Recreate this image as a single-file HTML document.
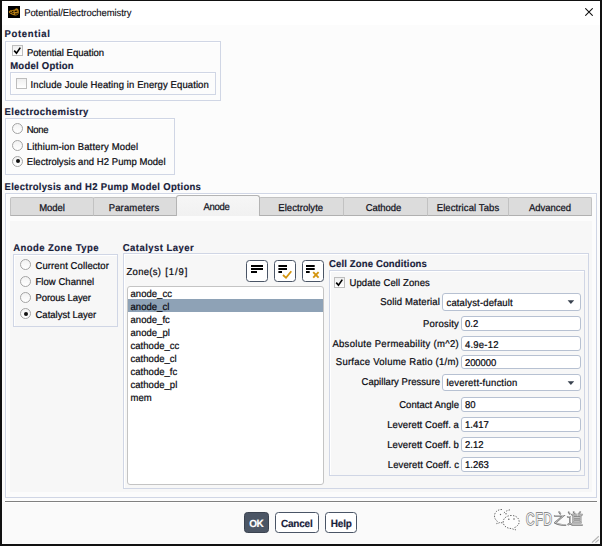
<!DOCTYPE html>
<html><head><meta charset="utf-8">
<style>
html,body{margin:0;padding:0;width:602px;height:546px;overflow:hidden;background:#fcfcfc;position:relative;}
*{box-sizing:border-box;}
.a{position:absolute;}
.t{position:absolute;font-family:"Liberation Sans",sans-serif;font-size:9.5px;letter-spacing:0px;line-height:12px;white-space:nowrap;color:#0a0a10;-webkit-text-stroke:0.22px #0a0a10;transform:translateY(0.9px) scaleY(1.04);transform-origin:0 9.2px;text-rendering:geometricPrecision;}
.b{font-weight:bold;font-size:9.5px;letter-spacing:0px;color:#17203a;-webkit-text-stroke:0.15px #17203a;}
.r{text-align:right;}
.gb{position:absolute;border:1px solid #d0d6e5;box-shadow:inset 1px 1px 0 #ffffff;}
.cb{position:absolute;width:11px;height:11px;border:1px solid #bdbdbd;background:linear-gradient(#efefef,#ffffff);}
.rd{position:absolute;width:11px;height:11px;border:1px solid #a4a4a4;border-radius:50%;background:linear-gradient(#f2f2f2,#ffffff);}
.rd.on::after{content:"";position:absolute;left:2.5px;top:2.5px;width:4px;height:4px;border-radius:50%;background:#111;}
.tab{position:absolute;top:197px;height:19px;background:#dcdcdc;border-radius:2px 2px 0 0;border:1px solid #c2c2c2;border-bottom-color:#b0b0b0;font-family:"Liberation Sans",sans-serif;font-size:9.5px;letter-spacing:-0.15px;text-align:center;line-height:19px;color:#14141e;-webkit-text-stroke:0.25px #14141e;}
.tb{position:absolute;background:#fff;border:1px solid #b7c1d2;border-radius:3px;}
.btn{position:absolute;background:#fff;border:1.3px solid #4a5566;border-radius:3.5px;}
.tl{display:inline-block;transform:translateY(-0.1px) scaleY(1.04);transform-origin:50% 12.6px;text-rendering:geometricPrecision;}
.chk{position:absolute;left:-1px;top:-1px;width:11px;height:11px;}
</style></head><body>
  <!-- window frame -->
  <div class="a" style="left:0;top:0;width:602px;height:1px;background:#111;"></div>
  <div class="a" style="left:0;top:0;width:2px;height:546px;background:#111;"></div>
  <div class="a" style="left:600px;top:0;width:2px;height:546px;background:#111;"></div>
  <div class="a" style="left:0;top:544px;width:602px;height:2px;background:#111;"></div>
  <!-- title bar -->
  <div class="a" style="left:2px;top:1px;width:598px;height:24px;background:#ffffff;"></div>
  <div class="a" style="left:8px;top:6px;width:12px;height:12px;background:#000;">
    <svg width="12" height="12" viewBox="0 0 12 12" style="position:absolute;left:0;top:0">
      <path d="M0.8 5.7 C1.5 4.5 2.5 4 3.5 4.3 C4.5 4 5 3.6 6 3.8 C7 3.2 7.8 2 9 2.2 C10.3 2.8 11 4.5 10.9 6 C10.8 8 9.5 9.3 7.5 9.5 C5.5 9.6 3.5 8.5 2 7.6 C1.3 7 0.9 6.3 0.8 5.7 Z" fill="#b57c12"/>
      <path d="M2.2 6.2 L3.6 6.6 M4.2 7.1 L5.7 7.4 M6.7 5.7 C7.5 5.1 8.6 5 9.3 5.4 M7 8 C8 8.2 9 7.9 9.6 7.3 M4 5.5 L5.5 5.2" fill="none" stroke="#000" stroke-width="1.05"/>
    </svg>
  </div>
  <div class="t" style="left:24.2px;top:6.7px;-webkit-text-stroke:0.1px #000;color:#0c0c14;letter-spacing:-0.1px;">Potential/Electrochemistry</div>
  <svg class="a" style="left:585px;top:8px" width="8" height="8" viewBox="0 0 8 8"><path d="M0.3 0.3 L7.7 7.7 M7.7 0.3 L0.3 7.7" stroke="#111" stroke-width="1.05"/></svg>

  <!-- Potential -->
  <div class="t b" style="left:4.5px;top:28.4px;letter-spacing:0.65px;">Potential</div>
  <div class="gb" style="left:5px;top:41px;width:216px;height:60px;"></div>
  <div class="cb" style="left:12px;top:44.8px;"><svg class="chk" viewBox="0 0 11 11"><path d="M2.2 5.6 L4.5 8.1 L8.3 2.6" fill="none" stroke="#000" stroke-width="1.6"/></svg></div>
  <div class="t" style="left:27px;top:46.6px;letter-spacing:0.0px;">Potential Equation</div>
  <div class="t b" style="left:10.2px;top:60.4px;letter-spacing:0.25px;">Model Option</div>
  <div class="gb" style="left:10px;top:72px;width:206px;height:23px;"></div>
  <div class="cb" style="left:15.5px;top:77.6px;"></div>
  <div class="t" style="left:30.6px;top:78.9px;letter-spacing:0.1px;">Include Joule Heating in Energy Equation</div>

  <!-- Electrochemistry -->
  <div class="t b" style="left:4.5px;top:106.4px;letter-spacing:0.45px;">Electrochemistry</div>
  <div class="gb" style="left:5px;top:118px;width:170px;height:57px;"></div>
  <div class="rd" style="left:12px;top:123px;"></div>
  <div class="t" style="left:26.8px;top:123.8px;letter-spacing:-0.3px;">None</div>
  <div class="rd" style="left:12px;top:139.5px;"></div>
  <div class="t" style="left:26.8px;top:140.5px;letter-spacing:0.15px;">Lithium-ion Battery Model</div>
  <div class="rd on" style="left:12px;top:155.8px;"></div>
  <div class="t" style="left:26.8px;top:156.2px;letter-spacing:0.05px;">Electrolysis and H2 Pump Model</div>

  <!-- Options -->
  <div class="t b" style="left:4.5px;top:180.7px;letter-spacing:0.3px;">Electrolysis and H2 Pump Model Options</div>
  <div class="gb" style="left:5px;top:193px;width:592px;height:305px;background:#fcfcfc;"></div>
  <div class="a" style="left:10px;top:221px;width:582px;height:271px;background:#f7f7f7;"></div>
  <div class="tab" style="left:10px;width:84px;letter-spacing:-0.05px;"><span class="tl">Model</span></div>
  <div class="tab" style="left:93px;width:84px;letter-spacing:0.15px;padding-right:2px;"><span class="tl">Parameters</span></div>
  <div class="tab" style="left:259px;width:85px;letter-spacing:0.05px;padding-right:1.5px;"><span class="tl">Electrolyte</span></div>
  <div class="tab" style="left:343px;width:85px;letter-spacing:-0.05px;padding-right:4px;"><span class="tl">Cathode</span></div>
  <div class="tab" style="left:427px;width:82px;letter-spacing:0.1px;"><span class="tl">Electrical Tabs</span></div>
  <div class="tab" style="left:508px;width:84px;letter-spacing:-0.05px;"><span class="tl">Advanced</span></div>
  <div class="tab" style="left:176px;top:195px;width:84px;height:21px;background:linear-gradient(#f6f6f6,#f1f1f1);border-color:#b4b4b4;border-bottom:none;border-radius:3px 3px 0 0;line-height:22px;letter-spacing:-0.25px;padding-right:3px;"><span class="tl">Anode</span></div>

  <!-- Anode Zone Type -->
  <div class="t b" style="left:13.2px;top:242.2px;letter-spacing:0.45px;">Anode Zone Type</div>
  <div class="gb" style="left:13px;top:254px;width:105px;height:73px;"></div>
  <div class="rd" style="left:20px;top:259px;"></div>
  <div class="t" style="left:35.5px;top:259.8px;letter-spacing:0.1px;">Current Collector</div>
  <div class="rd" style="left:20px;top:275.5px;"></div>
  <div class="t" style="left:35.5px;top:276px;letter-spacing:0.05px;">Flow Channel</div>
  <div class="rd" style="left:20px;top:291.8px;"></div>
  <div class="t" style="left:35.5px;top:292px;letter-spacing:-0.1px;">Porous Layer</div>
  <div class="rd on" style="left:20px;top:308px;"></div>
  <div class="t" style="left:35.5px;top:308.5px;letter-spacing:0.0px;">Catalyst Layer</div>

  <!-- Catalyst Layer -->
  <div class="t b" style="left:122.8px;top:242px;letter-spacing:0.45px;">Catalyst Layer</div>
  <div class="gb" style="left:123px;top:253px;width:466px;height:236px;"></div>
  <div class="t" style="left:126.5px;top:266.2px;letter-spacing:0.3px;">Zone(s)</div><div class="t" style="left:165.3px;top:266.2px;letter-spacing:0.9px;">[1/9]</div>
  <div class="btn" style="left:246px;top:260px;width:22px;height:22px;">
    <svg class="a" style="left:-1px;top:-1px" width="22" height="22" viewBox="0 0 22 22"><path d="M5 6H17M5 9H17M5 12H11" stroke="#000" stroke-width="2"/></svg>
  </div>
  <div class="btn" style="left:274px;top:260px;width:22px;height:22px;">
    <svg class="a" style="left:-1px;top:-1px" width="22" height="22" viewBox="0 0 22 22"><path d="M4.4 6H13M4.4 9H13M4.4 12H8" stroke="#000" stroke-width="2"/><path d="M9 15L12 17.8L17.3 11.2" fill="none" stroke="#d4950f" stroke-width="1.8"/></svg>
  </div>
  <div class="btn" style="left:302px;top:260px;width:22px;height:22px;">
    <svg class="a" style="left:-1px;top:-1px" width="22" height="22" viewBox="0 0 22 22"><path d="M4 6H12.7M4 9H12.7M4 12H7.7" stroke="#000" stroke-width="2"/><path d="M11.2 12.2L16.6 17.6M16.6 12.2L11.2 17.6" fill="none" stroke="#d4950f" stroke-width="1.9"/></svg>
  </div>
  <div class="a" style="left:127px;top:285.5px;width:197px;height:199px;background:#fff;border:1px solid #c4c4c4;border-radius:3px;"></div>
  <div class="a" style="left:128px;top:299.3px;width:195px;height:13px;background:#8ea2b6;"></div>
  <div class="t" style="left:130.5px;top:287.5px;line-height:12px;letter-spacing:0.03px;">anode_cc</div>
  <div class="t" style="left:130.5px;top:300.5px;line-height:12px;letter-spacing:0.03px;">anode_cl</div>
  <div class="t" style="left:130.5px;top:313.5px;line-height:12px;letter-spacing:0.03px;">anode_fc</div>
  <div class="t" style="left:130.5px;top:326.5px;line-height:12px;letter-spacing:0.03px;">anode_pl</div>
  <div class="t" style="left:130.5px;top:339.5px;line-height:12px;letter-spacing:0.03px;">cathode_cc</div>
  <div class="t" style="left:130.5px;top:352.5px;line-height:12px;letter-spacing:0.03px;">cathode_cl</div>
  <div class="t" style="left:130.5px;top:365.5px;line-height:12px;letter-spacing:0.03px;">cathode_fc</div>
  <div class="t" style="left:130.5px;top:378.5px;line-height:12px;letter-spacing:0.03px;">cathode_pl</div>
  <div class="t" style="left:130.5px;top:391.5px;line-height:12px;letter-spacing:0.03px;">mem</div>

  <!-- Cell Zone Conditions -->
  <div class="t b" style="left:329px;top:257.8px;letter-spacing:0.15px;">Cell Zone Conditions</div>
  <div class="gb" style="left:329px;top:270px;width:256px;height:206px;"></div>
  <div class="cb" style="left:334px;top:276.6px;"><svg class="chk" viewBox="0 0 11 11"><path d="M2.2 5.6 L4.5 8.1 L8.3 2.6" fill="none" stroke="#000" stroke-width="1.6"/></svg></div>
  <div class="t" style="left:349.5px;top:276.8px;letter-spacing:0.1px;">Update Cell Zones</div>

  <div class="t r" style="right:162px;top:295.5px;letter-spacing:0.15px;">Solid Material</div>
  <div class="tb" style="left:441.8px;top:293px;width:139.2px;height:17.5px;"></div>
  <div class="t" style="left:446.5px;top:297px;letter-spacing:0.15px;">catalyst-default</div>
  <svg class="a" style="left:566px;top:298.5px" width="10" height="6" viewBox="0 0 10 6"><path d="M1.6 1.3H8.2L4.9 5Z" fill="#39424f"/></svg>

  <div class="t r" style="right:143px;top:318.3px;letter-spacing:0.2px;">Porosity</div>
  <div class="tb" style="left:460.6px;top:316px;width:120.4px;height:14.5px;"></div>
  <div class="t" style="left:465px;top:318.3px;letter-spacing:0px;">0.2</div>

  <div class="t r" style="right:143px;top:338.2px;letter-spacing:0.3px;">Absolute Permeability (m^2)</div>
  <div class="tb" style="left:460.6px;top:336px;width:120.4px;height:14.5px;"></div>
  <div class="t" style="left:465px;top:338.5px;letter-spacing:0.2px;">4.9e-12</div>

  <div class="t r" style="right:143px;top:356.2px;letter-spacing:0.25px;">Surface Volume Ratio (1/m)</div>
  <div class="tb" style="left:460.6px;top:354.5px;width:120.4px;height:14px;"></div>
  <div class="t" style="left:465px;top:356.6px;letter-spacing:-0.1px;">200000</div>

  <div class="t r" style="right:162px;top:375.8px;letter-spacing:0.05px;">Capillary Pressure</div>
  <div class="tb" style="left:441.8px;top:374.3px;width:139.2px;height:17px;"></div>
  <div class="t" style="left:446.5px;top:377.4px;letter-spacing:0.2px;">leverett-function</div>
  <svg class="a" style="left:566px;top:380px" width="10" height="6" viewBox="0 0 10 6"><path d="M1.6 1.3H8.2L4.9 5Z" fill="#39424f"/></svg>

  <div class="t r" style="right:143px;top:398.7px;letter-spacing:0.05px;">Contact Angle</div>
  <div class="tb" style="left:460.6px;top:396.5px;width:120.4px;height:15px;"></div>
  <div class="t" style="left:465px;top:398.7px;letter-spacing:0px;">80</div>

  <div class="t r" style="right:143px;top:419.1px;letter-spacing:0.1px;">Leverett Coeff. a</div>
  <div class="tb" style="left:460.6px;top:416.5px;width:120.4px;height:15px;"></div>
  <div class="t" style="left:465px;top:419.1px;letter-spacing:0px;">1.417</div>

  <div class="t r" style="right:143px;top:438.9px;letter-spacing:0.1px;">Leverett Coeff. b</div>
  <div class="tb" style="left:460.6px;top:436.5px;width:120.4px;height:15px;"></div>
  <div class="t" style="left:465px;top:438.9px;letter-spacing:0px;">2.12</div>

  <div class="t r" style="right:143px;top:458.7px;letter-spacing:0.1px;">Leverett Coeff. c</div>
  <div class="tb" style="left:460.6px;top:457px;width:120.4px;height:15px;"></div>
  <div class="t" style="left:465px;top:458.7px;letter-spacing:0px;">1.263</div>

  <!-- separator & buttons -->
  <div class="a" style="left:5px;top:501px;width:592px;height:1px;background:#808080;"></div>
  <div class="a" style="left:2px;top:502px;width:598px;height:42px;background:#fafafa;"></div>
  <div class="a" style="left:5px;top:502px;width:592px;height:1px;background:#ffffff;"></div>
  <div class="btn" style="left:244px;top:512px;width:24.5px;height:20.5px;background:#4c5665;border-color:#3b4350;"></div>
  <div class="t b" style="left:244px;top:518px;width:24.5px;text-align:center;color:#fff;-webkit-text-stroke:0.15px #fff;font-size:10px;letter-spacing:-0.6px;">OK</div>
  <div class="btn" style="left:275px;top:512px;width:43.5px;height:20.5px;"></div>
  <div class="t b" style="left:275px;top:518px;width:43.5px;text-align:center;font-size:10px;letter-spacing:-0.2px;">Cancel</div>
  <div class="btn" style="left:324.8px;top:512px;width:32.7px;height:20.5px;"></div>
  <div class="t b" style="left:325px;top:518px;width:32.5px;text-align:center;font-size:10px;letter-spacing:-0.15px;">Help</div>

  <!-- watermark -->
  <svg class="a" style="left:490px;top:506px" width="34" height="26" viewBox="0 0 34 26">
    <g fill="#fdfdfd" stroke="#6a6a6a" stroke-width="1" stroke-dasharray="1.4 1.3">
      <path d="M12 3.5 C7 3.5 4.5 6.5 4.5 10 C4.5 12.5 5.8 14 7.3 15.2 L6.8 17.8 L9.8 16.5 C10.5 16.7 11.5 16.8 12.5 16.8"/>
      <path d="M20 3.8 C17 4.5 14 6 13.3 8"/>
      <path d="M21.5 9.5 C17 9.5 13.2 12 13.2 16 C13.2 20 17 22.5 21.5 22.5 L25.5 24 L24.8 21.5 C27.5 20 29.2 18 29.2 16 C29.2 12 26 9.5 21.5 9.5 Z"/>
    </g>
    <g fill="#666"><circle cx="10.5" cy="8.5" r="0.7"/><circle cx="16" cy="7.8" r="0.7"/><circle cx="18.8" cy="13.2" r="0.8"/><circle cx="24" cy="13" r="0.8"/></g>
  </svg>
  <div class="a" style="left:525.8px;top:509.5px;font-family:'Liberation Sans',sans-serif;font-size:16.2px;line-height:18px;letter-spacing:1.4px;color:#f4f4f4;-webkit-text-stroke:1.4px #707070;paint-order:stroke fill;white-space:nowrap;transform:scaleX(0.72);transform-origin:0 0;">CFD</div>
  <svg class="a" style="left:553px;top:511px" width="31" height="16" viewBox="0 0 31 16">
    <g fill="none" stroke="#767676" stroke-width="1.8" stroke-linecap="round" transform="translate(-0.3,0.3)">
      <path d="M6.5 0.8 L7.6 2.4"/>
      <path d="M2 4.5 H10.5 L2.5 11.5"/>
      <path d="M2.5 11.5 Q5 13.6 12.8 13.8"/>
      <path d="M16 1 L17 2.4"/>
      <path d="M15 5.5 H17.3 V11"/>
      <path d="M15.5 13.2 Q17.5 11.5 19.5 13.5 H29.5"/>
      <path d="M21 0.8 L22 2.2 M27.5 0.8 L26.5 2.2"/>
      <path d="M19.2 3.3 H29.5 M24.3 3.3 V4.8"/>
      <path d="M20.5 4.8 H28 V11.3 H20.5 Z M20.5 7 H28 M20.5 9.1 H28"/>
    </g>
    <g fill="none" stroke="#eeeeee" stroke-width="0.6" stroke-linecap="round">
      <path d="M6.5 0.8 L7.6 2.4"/>
      <path d="M2 4.5 H10.5 L2.5 11.5"/>
      <path d="M2.5 11.5 Q5 13.6 12.8 13.8"/>
      <path d="M16 1 L17 2.4"/>
      <path d="M15 5.5 H17.3 V11"/>
      <path d="M15.5 13.2 Q17.5 11.5 19.5 13.5 H29.5"/>
      <path d="M21 0.8 L22 2.2 M27.5 0.8 L26.5 2.2"/>
      <path d="M19.2 3.3 H29.5 M24.3 3.3 V4.8"/>
      <path d="M20.5 4.8 H28 V11.3 H20.5 Z M20.5 7 H28 M20.5 9.1 H28"/>
    </g>
  </svg>
  <svg class="a" style="left:588px;top:532px" width="12" height="12" viewBox="0 0 12 12">
    <g stroke="#b4b4b4" stroke-width="1.2"><path d="M10.8 4.3 L4 10.6 M10.8 7.6 L7.4 10.6"/></g>
  </svg>
</body></html>
